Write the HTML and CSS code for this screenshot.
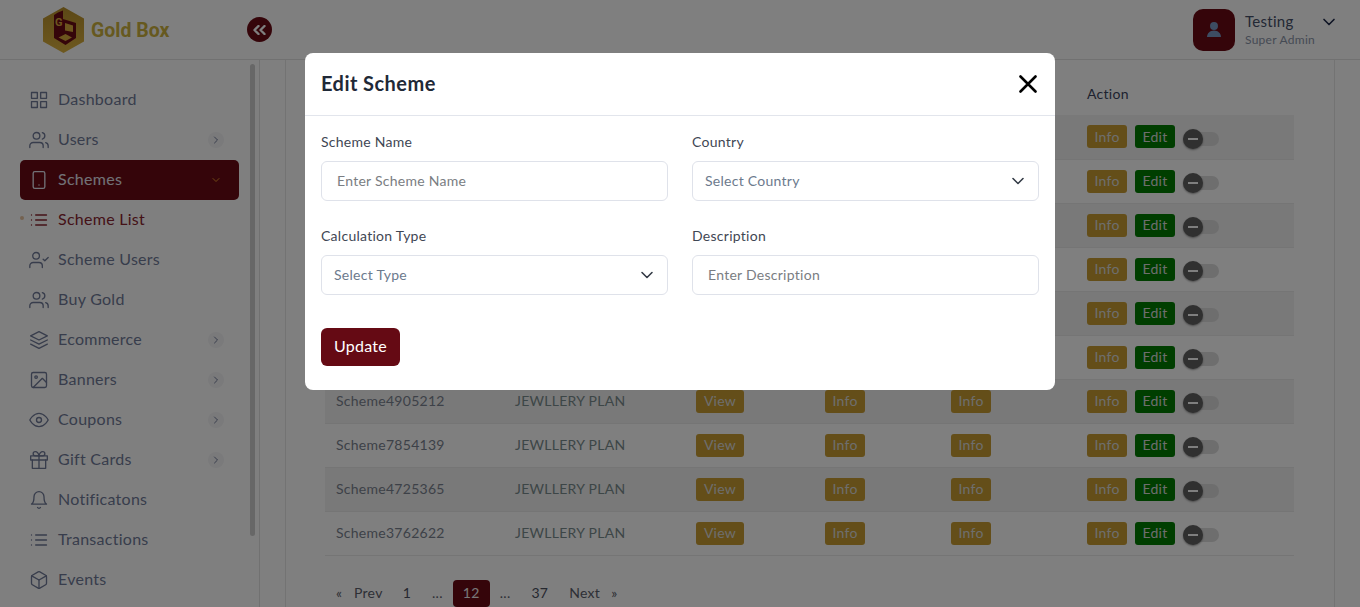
FILE: index.html
```html
<!DOCTYPE html>
<html lang="en">
<head>
<meta charset="utf-8">
<title>Gold Box</title>
<link rel="stylesheet" href="styles.css">
</head>
<body>
<svg class="defs" width="0" height="0" aria-hidden="true">
  <symbol id="i-grid" viewBox="0 0 24 24"><rect x="3" y="3" width="7" height="7"/><rect x="14" y="3" width="7" height="7"/><rect x="14" y="14" width="7" height="7"/><rect x="3" y="14" width="7" height="7"/></symbol>
  <symbol id="i-users" viewBox="0 0 24 24"><path d="M17 21v-2a4 4 0 0 0-4-4H5a4 4 0 0 0-4 4v2"/><circle cx="9" cy="7" r="4"/><path d="M23 21v-2a4 4 0 0 0-3-3.87"/><path d="M16 3.13a4 4 0 0 1 0 7.75"/></symbol>
  <symbol id="i-phone" viewBox="0 0 24 24"><rect x="5" y="2" width="14" height="20" rx="2"/><line x1="12" y1="18" x2="12.01" y2="18"/></symbol>
  <symbol id="i-list" viewBox="0 0 24 24"><line x1="8" y1="6" x2="21" y2="6"/><line x1="8" y1="12" x2="21" y2="12"/><line x1="8" y1="18" x2="21" y2="18"/><line x1="3" y1="6" x2="3.01" y2="6"/><line x1="3" y1="12" x2="3.01" y2="12"/><line x1="3" y1="18" x2="3.01" y2="18"/></symbol>
  <symbol id="i-ucheck" viewBox="0 0 24 24"><path d="M16 21v-2a4 4 0 0 0-4-4H5a4 4 0 0 0-4 4v2"/><circle cx="8.5" cy="7" r="4"/><polyline points="17 11 19 13 23 9"/></symbol>
  <symbol id="i-layers" viewBox="0 0 24 24"><polygon points="12 2 2 7 12 12 22 7 12 2"/><polyline points="2 17 12 22 22 17"/><polyline points="2 12 12 17 22 12"/></symbol>
  <symbol id="i-image" viewBox="0 0 24 24"><rect x="3" y="3" width="18" height="18" rx="2"/><circle cx="8.5" cy="8.5" r="1.5"/><polyline points="21 15 16 10 5 21"/></symbol>
  <symbol id="i-eye" viewBox="0 0 24 24"><path d="M1 12s4-8 11-8 11 8 11 8-4 8-11 8-11-8-11-8z"/><circle cx="12" cy="12" r="3"/></symbol>
  <symbol id="i-gift" viewBox="0 0 24 24"><polyline points="20 12 20 22 4 22 4 12"/><rect x="2" y="7" width="20" height="5"/><line x1="12" y1="22" x2="12" y2="7"/><path d="M12 7H7.5a2.5 2.5 0 0 1 0-5C11 2 12 7 12 7z"/><path d="M12 7h4.5a2.5 2.5 0 0 0 0-5C13 2 12 7 12 7z"/></symbol>
  <symbol id="i-bell" viewBox="0 0 24 24"><path d="M18 8A6 6 0 0 0 6 8c0 7-3 9-3 9h18s-3-2-3-9"/><path d="M13.73 21a2 2 0 0 1-3.46 0"/></symbol>
  <symbol id="i-box" viewBox="0 0 24 24"><path d="M21 16V8a2 2 0 0 0-1-1.73l-7-4a2 2 0 0 0-2 0l-7 4A2 2 0 0 0 3 8v8a2 2 0 0 0 1 1.73l7 4a2 2 0 0 0 2 0l7-4A2 2 0 0 0 21 16z"/><polyline points="3.27 6.96 12 12.01 20.73 6.96"/><line x1="12" y1="22.08" x2="12" y2="12"/></symbol>
  <symbol id="i-right" viewBox="0 0 24 24"><polyline points="9 6 15 12 9 18"/></symbol>
  <symbol id="i-down" viewBox="0 0 24 24"><polyline points="6 9 12 15 18 9"/></symbol>
</svg>

<div class="app">
  <header class="topbar">
    <div class="brand">
      <svg class="logo" viewBox="0 0 41 46" aria-hidden="true">
        <defs><linearGradient id="gold" x1="0" y1="0" x2="0" y2="1"><stop offset="0" stop-color="#b8902c"/><stop offset="1" stop-color="#dcb240"/></linearGradient></defs>
        <polygon points="20.5,0 41,11.5 41,34.5 20.5,46 0,34.5 0,11.5" fill="url(#gold)"/>
        <path d="M11 8 15 5.500 20 3.500V12L33 16V31L22.500 38 11 31Z" fill="#6b0a14"/>
        <path d="M22 16 30 18.500V25L22 23.500Z" fill="#d8ab3c"/>
        <path d="M22.500 27 29 30.500 22.500 34 15.500 30.500Z" fill="#d8ab3c"/>
        <text class="logo-g" x="12" y="19">G</text>
      </svg>
      <span class="brand-name">Gold Box</span>
    </div>
    <button class="collapse" type="button" aria-label="Collapse sidebar">
      <svg viewBox="0 0 13 10" aria-hidden="true"><path d="M5.500 1 1.500 5l4 4M11.500 1l-4 4 4 4"/></svg>
    </button>
    <div class="account">
      <div class="avatar">
        <svg viewBox="0 0 24 24" aria-hidden="true"><circle cx="12" cy="6.700" r="5.300"/><path d="M2.700 21.300c0-5 4-8.800 9.300-8.800s9.300 3.800 9.300 8.800z"/></svg>
      </div>
      <div class="who">
        <div class="who-name">Testing</div>
        <div class="who-role">Super Admin</div>
      </div>
      <svg class="icon who-chev"><use href="#i-down"/></svg>
    </div>
  </header>

  <div class="body">
    <aside class="sidebar">
      <nav class="nav">
        <a class="nav-item"><svg class="icon"><use href="#i-grid"/></svg><span>Dashboard</span></a>
        <a class="nav-item"><svg class="icon"><use href="#i-users"/></svg><span>Users</span><i class="more"><svg><use href="#i-right"/></svg></i></a>
        <a class="nav-item active"><svg class="icon"><use href="#i-phone"/></svg><span>Schemes</span><i class="more"><svg><use href="#i-down"/></svg></i></a>
        <a class="nav-item current"><svg class="icon"><use href="#i-list"/></svg><span>Scheme List</span></a>
        <a class="nav-item"><svg class="icon"><use href="#i-ucheck"/></svg><span>Scheme Users</span></a>
        <a class="nav-item"><svg class="icon"><use href="#i-users"/></svg><span>Buy Gold</span></a>
        <a class="nav-item"><svg class="icon"><use href="#i-layers"/></svg><span>Ecommerce</span><i class="more"><svg><use href="#i-right"/></svg></i></a>
        <a class="nav-item"><svg class="icon"><use href="#i-image"/></svg><span>Banners</span><i class="more"><svg><use href="#i-right"/></svg></i></a>
        <a class="nav-item"><svg class="icon"><use href="#i-eye"/></svg><span>Coupons</span><i class="more"><svg><use href="#i-right"/></svg></i></a>
        <a class="nav-item"><svg class="icon"><use href="#i-gift"/></svg><span>Gift Cards</span><i class="more"><svg><use href="#i-right"/></svg></i></a>
        <a class="nav-item"><svg class="icon"><use href="#i-bell"/></svg><span>Notificatons</span></a>
        <a class="nav-item"><svg class="icon"><use href="#i-list"/></svg><span>Transactions</span></a>
        <a class="nav-item"><svg class="icon"><use href="#i-box"/></svg><span>Events</span></a>
      </nav>
      <div class="thumb"></div>
    </aside>

    <main class="main">
      <section class="card">
        <table class="table">
          <colgroup><col class="c1"><col class="c2"><col class="c3"><col class="c4"><col class="c5"><col></colgroup>
          <thead><tr><th></th><th></th><th></th><th></th><th></th><th>Action</th></tr></thead>
          <tbody>
            <tr><td></td><td></td><td></td><td></td><td></td><td><div class="acts"><a class="btn gold">Info</a><a class="btn green">Edit</a><span class="toggle"><b></b></span></div></td></tr>
            <tr><td></td><td></td><td></td><td></td><td></td><td><div class="acts"><a class="btn gold">Info</a><a class="btn green">Edit</a><span class="toggle"><b></b></span></div></td></tr>
            <tr><td></td><td></td><td></td><td></td><td></td><td><div class="acts"><a class="btn gold">Info</a><a class="btn green">Edit</a><span class="toggle"><b></b></span></div></td></tr>
            <tr><td></td><td></td><td></td><td></td><td></td><td><div class="acts"><a class="btn gold">Info</a><a class="btn green">Edit</a><span class="toggle"><b></b></span></div></td></tr>
            <tr><td></td><td></td><td></td><td></td><td></td><td><div class="acts"><a class="btn gold">Info</a><a class="btn green">Edit</a><span class="toggle"><b></b></span></div></td></tr>
            <tr><td></td><td></td><td></td><td></td><td></td><td><div class="acts"><a class="btn gold">Info</a><a class="btn green">Edit</a><span class="toggle"><b></b></span></div></td></tr>
            <tr><td>Scheme4905212</td><td class="plan">JEWLLERY PLAN</td><td class="cell-btn"><a class="btn gold wide">View</a></td><td class="cell-btn"><a class="btn gold">Info</a></td><td class="cell-btn"><a class="btn gold">Info</a></td><td><div class="acts"><a class="btn gold">Info</a><a class="btn green">Edit</a><span class="toggle"><b></b></span></div></td></tr>
            <tr><td>Scheme7854139</td><td class="plan">JEWLLERY PLAN</td><td class="cell-btn"><a class="btn gold wide">View</a></td><td class="cell-btn"><a class="btn gold">Info</a></td><td class="cell-btn"><a class="btn gold">Info</a></td><td><div class="acts"><a class="btn gold">Info</a><a class="btn green">Edit</a><span class="toggle"><b></b></span></div></td></tr>
            <tr><td>Scheme4725365</td><td class="plan">JEWLLERY PLAN</td><td class="cell-btn"><a class="btn gold wide">View</a></td><td class="cell-btn"><a class="btn gold">Info</a></td><td class="cell-btn"><a class="btn gold">Info</a></td><td><div class="acts"><a class="btn gold">Info</a><a class="btn green">Edit</a><span class="toggle"><b></b></span></div></td></tr>
            <tr><td>Scheme3762622</td><td class="plan">JEWLLERY PLAN</td><td class="cell-btn"><a class="btn gold wide">View</a></td><td class="cell-btn"><a class="btn gold">Info</a></td><td class="cell-btn"><a class="btn gold">Info</a></td><td><div class="acts"><a class="btn gold">Info</a><a class="btn green">Edit</a><span class="toggle"><b></b></span></div></td></tr>
          </tbody>
        </table>
        <div class="pager">
          <span class="pg-arrow">«</span><a class="pg-prev">Prev</a><a class="pg-num">1</a><span class="pg-dots">...</span><a class="pg-cur">12</a><span class="pg-dots">...</span><a class="pg-num">37</a><a class="pg-next">Next</a><span class="pg-arrow">»</span>
        </div>
      </section>
    </main>
  </div>
</div>

<div class="backdrop"></div>

<div class="modal" role="dialog" aria-label="Edit Scheme">
  <div class="modal-head">
    <h2>Edit Scheme</h2>
    <svg class="close" viewBox="0 0 18 18" aria-label="Close"><path d="M1.500 1.500 16.500 16.500M16.500 1.500 1.500 16.500"/></svg>
  </div>
  <form class="modal-body">
    <div class="fields">
      <div class="field"><label>Scheme Name</label><input type="text" placeholder="Enter Scheme Name"></div>
      <div class="field"><label>Country</label><div class="select"><select><option>Select Country</option></select><svg class="icon"><use href="#i-down"/></svg></div></div>
      <div class="field"><label>Calculation Type</label><div class="select"><select><option>Select Type</option></select><svg class="icon"><use href="#i-down"/></svg></div></div>
      <div class="field"><label>Description</label><input type="text" placeholder="Enter Description"></div>
    </div>
    <button class="update" type="button">Update</button>
  </form>
</div>
</body>
</html>
```
FILE: styles.css
```css
* { box-sizing: border-box; }
html, body { margin: 0; height: 100%; overflow: hidden; }
body { font-family: "Lato", "Noto Sans", sans-serif; font-size: 14px; letter-spacing: .27px; color: #5a6270; background: #fff; }
.defs { position: absolute; }
.icon { width: 20px; height: 20px; fill: none; stroke: currentColor; stroke-width: 1.6; stroke-linecap: round; stroke-linejoin: round; flex: none; }

.app { height: 100vh; display: flex; flex-direction: column; }

/* top bar */
.topbar { height: 60px; flex: none; display: flex; align-items: center; border-bottom: 1px solid #e3e3e3; position: relative; padding-left: 43px; padding-right: 21px; }
.brand { display: flex; align-items: center; gap: 7px; }
.logo { width: 41px; height: 46px; }
.logo-g { font: 700 11px "Roboto", sans-serif; fill: #d8ab3c; }
.brand-name { font: 700 19.5px/1 "Roboto", sans-serif; letter-spacing: 0; color: #cdb23e; padding-top: 2px; }
.collapse { position: absolute; left: 247px; top: 17px; width: 25px; height: 25px; padding: 0; border: 0; border-radius: 50%; background: #6b0a14; display: flex; align-items: center; justify-content: center; }
.collapse svg { width: 13px; height: 10px; fill: none; stroke: #fff; stroke-width: 2.4; stroke-linecap: round; stroke-linejoin: round; }
.account { margin-left: auto; display: flex; align-items: center; }
.avatar { width: 42px; height: 42px; border-radius: 10px; background: #6b0a14; display: flex; align-items: center; justify-content: center; }
.avatar svg { width: 18px; height: 18px; fill: #7a9ac6; }
.who { margin-left: 10px; width: 77px; }
.who-name { font-size: 15px; line-height: 20px; color: #46506a; }
.who-role { font-size: 12px; line-height: 16px; margin-top: 1px; color: #8b94a8; }
.who-chev { margin: -16px 0 0 -3px; color: #1f2a4a; stroke-width: 2; }

/* sidebar */
.body { flex: 1; display: flex; min-height: 0; }
.sidebar { width: 260px; flex: none; border-right: 1px solid #e3e3e3; position: relative; overflow: hidden; padding: 20px 20px 0; }
.nav { display: flex; flex-direction: column; width: 219px; }
.nav-item { height: 40px; flex: none; display: flex; align-items: center; padding: 0 15px 0 9px; gap: 9px; font-size: 16px; color: #707a98; border-radius: 5px; position: relative; }
.nav-item span { flex: 1; padding-bottom: 3px; }
.more { width: 16px; height: 16px; border-radius: 50%; background: #f4f4f6; display: flex; align-items: center; justify-content: center; }
.more svg { width: 12px; height: 12px; fill: none; stroke: #707a98; stroke-width: 2; stroke-linecap: round; stroke-linejoin: round; }
.active { background: #6b0a14; color: #e3e4ee; }
.active .more { background: none; }
.active .more svg { stroke: #e0902a; }
.current { color: #8a2530; }
.current::before { content: ""; position: absolute; left: 0; top: 16px; width: 4px; height: 4px; border-radius: 50%; background: #e8c4a0; }
.thumb { position: absolute; right: 4px; top: 4px; width: 5px; height: 472px; border-radius: 3px; background: #cfcfcf; }

/* main card */
.main { flex: 1; min-width: 0; padding: 0 25px; overflow: hidden; }
.card { height: 100%; border-left: 1px solid #e6e6e6; border-right: 1px solid #e6e6e6; padding: 11px 39px 0; }
.table { width: 969px; table-layout: fixed; border-collapse: collapse; }
.c1 { width: 179px; } .c2 { width: 181px; } .c3 { width: 129px; } .c4 { width: 126px; } .c5 { width: 136px; }
.table th { height: 44px; padding: 0 11px; text-align: left; font-weight: 400; color: #3d4560; }
.table td { height: 44px; padding: 0 11px 2px; border-bottom: 1px solid #eaeaea; color: #7b8390; }
.table tbody tr:nth-child(odd) td { background: #f2f2f2; }
.table .plan { color: #7a8c8e; }
.table .cell-btn { padding-bottom: 0; }
.btn { display: inline-flex; align-items: center; justify-content: center; width: 40px; height: 23px; padding: 0 0 1px; border-radius: 3px; font-size: 14px; color: #dcdcdc; vertical-align: middle; }
.wide { width: 48px; }
.gold { background: #c99c33; }
.green { background: #007c00; }
.acts { display: flex; align-items: center; gap: 8px; margin-top: 2px; }
.toggle { width: 36px; height: 14px; margin-top: 4px; border-radius: 7px; background: #dcdcdc; position: relative; }
.toggle b { position: absolute; left: 0; top: -3px; width: 20px; height: 20px; border-radius: 50%; background: #606060; box-shadow: 0 1px 2px rgba(0,0,0,.4); }
.toggle b::after { content: ""; position: absolute; left: 5px; top: 9px; width: 10px; height: 2px; background: #fff; }

/* pagination */
.pager { display: flex; align-items: center; height: 27px; margin-top: 24px; padding-left: 11px; color: #5c606c; }
.pager a, .pager span { line-height: 25px; padding-bottom: 2px; }
.pg-arrow { font-size: 14px; width: 18px; }
.pg-next + .pg-arrow { width: auto; margin-left: 11px; }
.pg-num { margin-left: 20px; color: #4c5060; }
.pg-dots { margin-left: 21px; }
.pg-cur { margin-left: 10px; width: 37px; text-align: center; border-radius: 4px; background: #6b0a14; color: #f0f0f0; }
.pg-cur + .pg-dots { margin-left: 10px; }
.pg-cur + .pg-dots + .pg-num { margin-left: 21px; }
.pg-next { margin-left: 21px; }

/* modal */
.backdrop { position: fixed; inset: 0; background: rgba(0,0,0,.5); }
.modal { position: fixed; left: 305px; top: 53px; width: 750px; height: 337px; border-radius: 8px; background: #fff; color: #374151; }
.modal-head { height: 63px; border-bottom: 1px solid #e2e5ec; display: flex; align-items: center; justify-content: space-between; padding: 0 18px 0 16px; }
.modal-head h2 { margin: 0 0 2px; font-size: 20px; font-weight: 700; letter-spacing: .45px; color: #1f2937; }
.close { width: 18px; height: 18px; fill: none; stroke: #000; stroke-width: 2.6; stroke-linecap: round; }
.modal-body { padding: 16px 16px 0; }
.fields { display: grid; grid-template-columns: 347px 347px; column-gap: 24px; row-gap: 25px; }
.field label { display: block; font-size: 14px; line-height: 19px; margin-bottom: 10px; color: #3f4754; }
.field input, .field select { display: block; width: 100%; height: 40px; border: 1px solid #dfe2ea; border-radius: 6px; background: #fff; font: 14px "Lato", "Noto Sans", sans-serif; letter-spacing: .27px; outline: 0; }
.field input { padding: 0 15px 2px; color: #3f4754; }
.field input::placeholder { color: #7a7d82; opacity: 1; }
.field select { padding: 0 12px 2px; color: #6c7a8d; appearance: none; }
.select { position: relative; }
.select .icon { position: absolute; right: 11px; top: 10px; color: #333a45; stroke-width: 1.9; pointer-events: none; }
.update { margin-top: 33px; width: 79px; height: 38px; padding: 0 0 3px; border: 0; border-radius: 6px; background: #650a14; color: #fff; font: 16px "Lato", "Noto Sans", sans-serif; letter-spacing: .27px; }
```
